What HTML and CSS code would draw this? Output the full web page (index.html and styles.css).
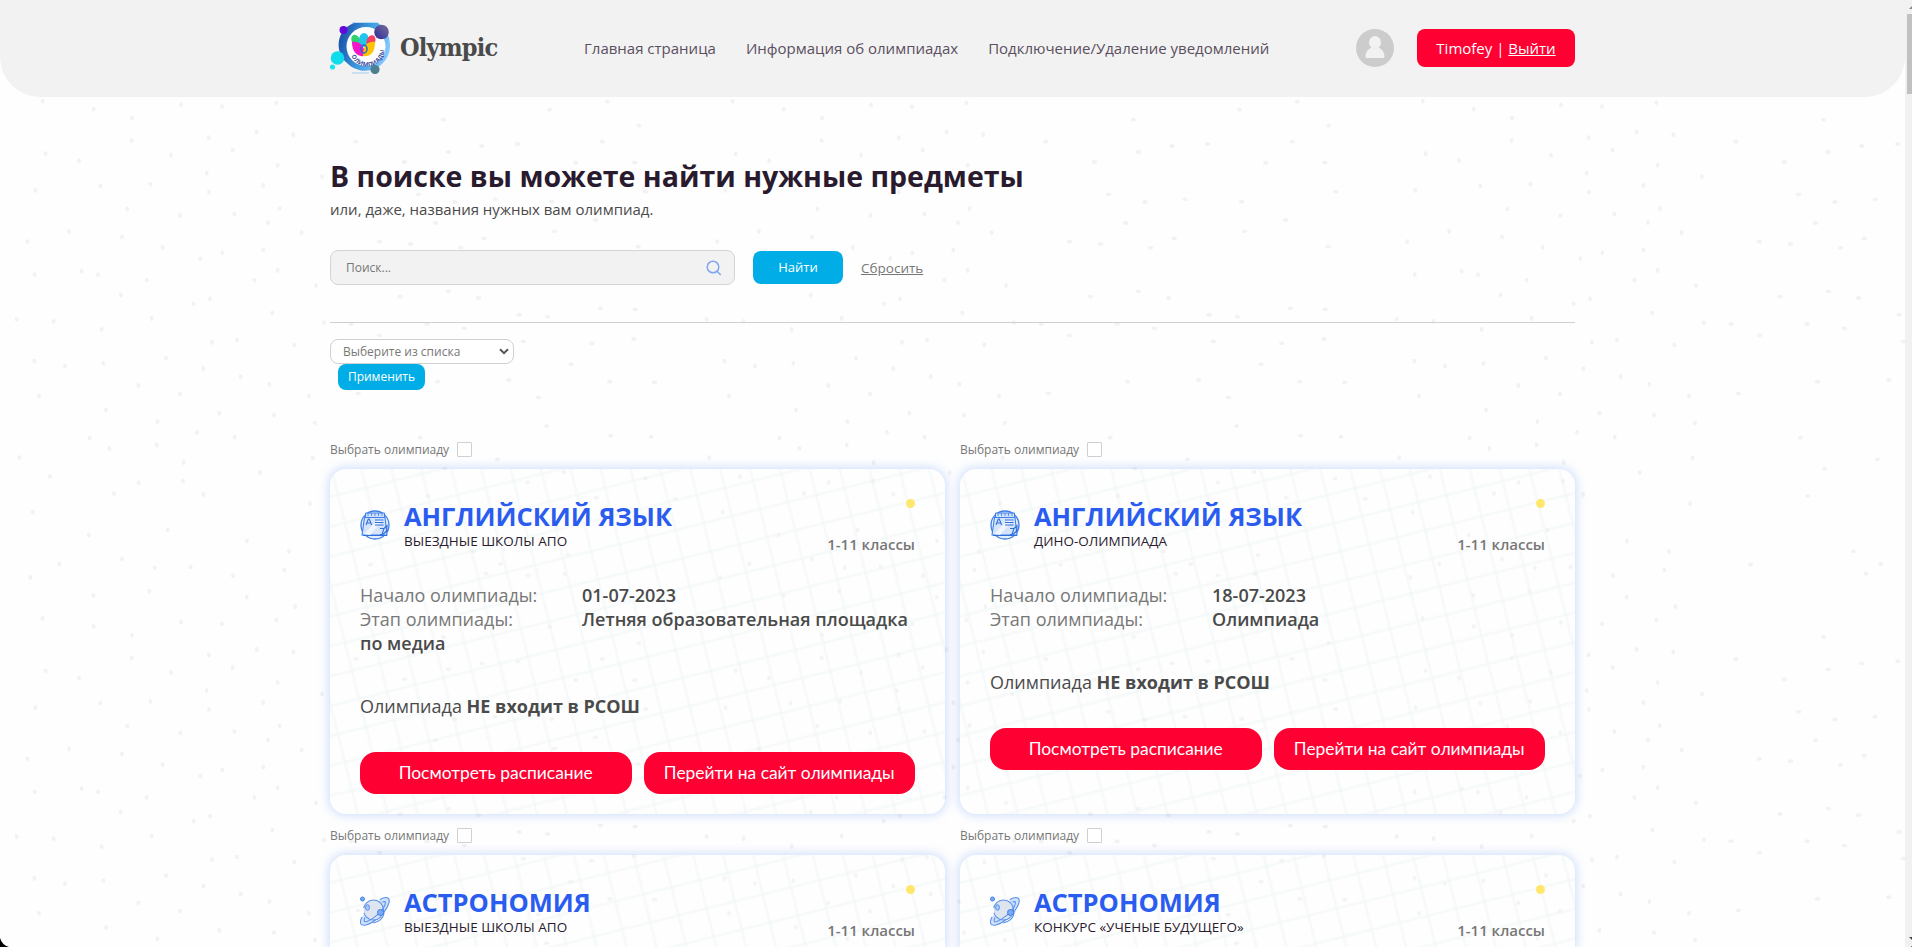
FILE: index.html
```html
<!DOCTYPE html>
<html lang="ru">
<head>
<meta charset="utf-8">
<title>Olympic</title>
<link rel="stylesheet" href="styles.css">
</head>
<body>
<svg class="dots" viewBox="0 0 1905 947" aria-hidden="true">
  <defs>
    <g id="dots">
      <path transform="translate(0 290) scale(.3333 .419)" d="M362 12h.1M630 21h.1M581 33h.1M817 55h.1M50 70h.1M161 75h.1M305 94h.1M455 68h.1M972 78h.1M636 125h.1M711 119h.1M883 131h.1M103 170h.1M195 182h.1M310 175h.1M498 163h.1M610 188h.1M722 207h.1M808 225h.1M117 253h.1M415 228h.1M540 248h.1M927 253h.1M318 287h.1M658 294h.1M822 299h.1M472 314h.1M945 317h.1M591 340h.1M704 351h.1M269 354h.1M328 378h.1M470 370h.1M58 400h.1M551 412h.1M938 401h.1M779 436h.1M150 445h.1M416 460h.1M549 456h.1M342 486h.1M610 488h.1M930 510h.1M98 530h.1M266 585h.1M503 573h.1M741 599h.1M867 624h.1M178 654h.1M366 642h.1M464 663h.1M572 661h.1M699 682h.1M853 668h.1M91 686h.1M280 729h.1M448 719h.1M740 733h.1M886 756h.1M128 784h.1M281 803h.1M543 793h.1M666 797h.1M829 788h.1M396 824h.1M395 878h.1M626 871h.1M770 858h.1M880 864h.1M137 909h.1M237 926h.1M513 913h.1M698 901h.1M833 937h.1M620 956h.1M106 997h.1M301 986h.1M451 982h.1M627 1001h.1M790 985h.1M966 964h.1M382 1041h.1M541 1057h.1M703 1054h.1M839 1040h.1M804 1074h.1M207 1095h.1M82 1119h.1M366 1108h.1M488 1133h.1M905 1098h.1M667 1146h.1M790 1139h.1M601 1160h.1M104 1198h.1M245 1190h.1M294 1198h.1M440 1211h.1M763 1211h.1M833 1188h.1M948 1224h.1"/>
      <path transform="translate(310 657.3) scale(.472 .3333)" d="M97 5h.1M364 18h.1M293 36h.1M440 12h.1M200 66h.1M619 5h.1M563 68h.1M688 68h.1M230 163h.1M307 186h.1M512 185h.1M711 155h.1M392 178h.1M605 240h.1M266 249h.1M518 274h.1M369 295h.1M147 305h.1M213 312h.1M319 323h.1M695 320h.1"/>
      <path transform="translate(310 140) scale(.472 .3333)" d="M293 454h.1M191 470h.1M357 474h.1M615 505h.1M689 508h.1M443 524h.1M503 530h.1M87 552h.1M248 552h.1M327 565h.1M147 586h.1M452 604h.1M597 610h.1M686 597h.1M553 673h.1M270 725h.1M421 720h.1M635 725h.1M730 727h.1M484 772h.1M102 760h.1"/>
      <path transform="translate(310 420) scale(.421 .3333)" d="M562 18h.1M714 47h.1M810 50h.1M262 53h.1M445 118h.1M320 146h.1M603 156h.1M796 175h.1M517 187h.1M280 228h.1M680 233h.1M868 236h.1M144 434h.1M418 461h.1M605 462h.1M518 466h.1M388 394h.1M781 669h.1M569 621h.1M706 597h.1M613 405h.1M453 432h.1M317 651h.1"/>
    </g>
    <symbol id="english" viewBox="0 0 30 30">
      <circle cx="15" cy="15" r="14" fill="#e6effc" stroke="#3f7fe8" stroke-width="1.3"/>
      <path d="M5.500 3h19v6h-19z" fill="#cfe0fb" stroke="#3f7fe8"/>
      <path d="M8 3v3m3.500-3v3M15 3v3m3.500-3v3M22 3v3" stroke="#3f7fe8" stroke-width=".8"/>
      <path d="M4.500 7.500h20.500l2 17.500h-25z" fill="#d5e4fb" stroke="#3f7fe8" stroke-width="1.100"/>
      <path d="M4 24L18 10h5L10 25z" fill="#f1f6fe"/>
      <path d="M6 15l2.300-6h1l2.300 6M7 13h3.800M15 10h8.500M15 12.500h8.500M15 15h8.500M3 25.500h24M20 18.500h4l-2 6h-2m4-6l3-3v5l-4 4" fill="none" stroke="#2f6fdc" stroke-width="1.100"/>
    </symbol>
    <symbol id="planet" viewBox="0 0 30 30">
      <path d="M20 3.500C27-.5 31 2 28.500 8 26 16 14 27 6 29c-6 1-7-2-4-8" fill="#cfe0fb" stroke="#5b92ea" stroke-width="1.100"/>
      <circle cx="13.500" cy="14" r="10" fill="#dfe4f1" stroke="#5b92ea" stroke-width="1.100"/>
      <path d="M22.500 6c3.600-1.200 3.500.5 2 4C22 16 13 23 7 25.500c-3 1-3.500-.5-2-4M24 16c0 6-5 10-11 11" fill="none" stroke="#5b92ea" stroke-width="1.100"/>
      <ellipse cx="7.500" cy="11.500" rx="2" ry="2.800" fill="#a9c8f7" stroke="#5b92ea"/>
      <circle cx="20.500" cy="16.500" r="3" fill="#7dabf2" stroke="#3f7fe8"/>
      <circle cx="2.500" cy="3" r="2" fill="#7dabf2" stroke="#3f7fe8"/>
      <path d="M3.500 12v5" stroke="#fff" stroke-width="1.500"/>
    </symbol>
  </defs>
  <use href="#dots" y="-517.3"/><use href="#dots"/><use href="#dots" y="517.3"/>
  <use href="#dots" x="690" y="-517.3"/><use href="#dots" x="690"/><use href="#dots" x="690" y="517.3"/>
  <use href="#dots" x="1380" y="-517.3"/><use href="#dots" x="1380"/><use href="#dots" x="1380" y="517.3"/>
</svg>

<header class="header">
  <div class="header__inner">
    <a class="logo">
      <svg class="logo__mark" viewBox="0 0 60 52">
        <defs>
          <linearGradient id="ring" x1="0" y1=".3" x2="1" y2=".6"><stop offset="0" stop-color="#1a50a8"/><stop offset=".5" stop-color="#3c9be0"/><stop offset="1" stop-color="#8accff"/></linearGradient>
          <linearGradient id="ball" x1="0" y1="1" x2="1" y2="0"><stop offset="0" stop-color="#2b2a96"/><stop offset="1" stop-color="#7a6f9c"/></linearGradient>
          <path id="arc" d="M21.500 34A17 17 0 0 0 53 21"/>
        </defs>
        <path d="M22 .8h26M22 51h17" stroke="#9fd0f2"/>
        <path d="M24 1h24a26 26 0 0 1 12 22 25 25 0 0 1-43 18C4 30 6 8 24 1z" fill="url(#ring)"/>
        <circle cx="36" cy="24.500" r="19.500" fill="#fff"/>
        <ellipse cx="26" cy="19" rx="4.300" ry="6.500" transform="rotate(-25 26 19)" fill="#2fd36c"/>
        <ellipse cx="34" cy="18" rx="5" ry="7" fill="#22c5ee"/>
        <ellipse cx="41" cy="19" rx="4.300" ry="6" transform="rotate(20 41 19)" fill="#f6405f"/>
        <path d="M22 20c8-1 13 4 13 14-8 1-13-4-13-14z" fill="#f416c8"/>
        <path d="M45 20c-8-1-12 4-12 14 8 1 12-4 12-14z" fill="#ffc400"/>
        <ellipse cx="34" cy="27" rx="3" ry="4" fill="none" stroke="#2869c8" stroke-width="1.500"/>
        <text class="logo__arc"><textPath href="#arc">ОЛИМПИАДЫ</textPath></text>
        <circle cx="13.500" cy="8" r="4" fill="#6507dc"/>
        <circle cx="51.500" cy="10" r="7.300" fill="url(#ball)"/>
        <circle cx="7.500" cy="36" r="6.800" fill="#10dcec"/>
        <circle cx="2.500" cy="45" r="2.600" fill="#19e5ef"/>
        <circle cx="45" cy="47.500" r="4.600" fill="#4c8091"/>
      </svg>
      <span class="logo__text">Olympic</span>
    </a>
    <nav class="nav">
      <a>Главная страница</a>
      <a>Информация об олимпиадах</a>
      <a>Подключение/Удаление уведомлений</a>
    </nav>
    <svg class="avatar" viewBox="0 0 38 38"><circle cx="19" cy="19" r="19" fill="#ccc"/><ellipse cx="19" cy="13.500" rx="6" ry="6.500" fill="#f2f2f2"/><path d="M9.500 27.500c0-5 4-8.500 6.500-9 2 2 4 2 6 0 2.500.5 6.500 4 6.500 9 0 1-.5 1.500-1.500 1.500H11c-1 0-1.500-.5-1.500-1.500z" fill="#f2f2f2"/></svg>
    <div class="account">Timofey | <a>Выйти</a></div>
  </div>
</header>

<main class="container">
  <h1 class="title">В поиске вы можете найти нужные предметы</h1>
  <p class="subtitle">или, даже, названия нужных вам олимпиад.</p>
  <form class="search">
    <div class="search__box"><span>Поиск...</span>
      <svg viewBox="0 0 16 16" fill="none" stroke="#7fa6ee" stroke-width="1.500" stroke-linecap="round"><circle cx="7" cy="7" r="5.800"/><path d="M11.300 11.500l3 3"/></svg>
    </div>
    <a class="search__button">Найти</a>
    <a class="search__reset">Сбросить</a>
  </form>
  <div class="filter">
    <div class="filter__select">Выберите из списка
      <svg viewBox="0 0 10 7" fill="none" stroke="#555" stroke-width="2"><path d="M1 1.200l4 4 4-4"/></svg>
    </div>
    <a class="filter__apply">Применить</a>
  </div>

  <div class="grid">
    <section class="item">
      <label class="pick">Выбрать олимпиаду <i></i></label>
      <article class="card">
        <div class="card__head"><svg class="card__icon"><use href="#english"/></svg>
          <div><h2>АНГЛИЙСКИЙ ЯЗЫК</h2><p>ВЫЕЗДНЫЕ ШКОЛЫ АПО</p></div>
          <div class="card__side"><i></i><span>1-11 классы</span></div></div>
        <p class="card__row"><span>Начало олимпиады:</span><b>01-07-2023</b></p>
        <p class="card__row"><span>Этап олимпиады:</span><b>Летняя образовательная площадка по медиа</b></p>
        <p class="card__note">Олимпиада <b>НЕ входит в РСОШ</b></p>
        <div class="card__actions"><a>Посмотреть расписание</a><a>Перейти на сайт олимпиады</a></div>
      </article>
    </section>
    <section class="item">
      <label class="pick">Выбрать олимпиаду <i></i></label>
      <article class="card">
        <div class="card__head"><svg class="card__icon"><use href="#english"/></svg>
          <div><h2>АНГЛИЙСКИЙ ЯЗЫК</h2><p>ДИНО-ОЛИМПИАДА</p></div>
          <div class="card__side"><i></i><span>1-11 классы</span></div></div>
        <p class="card__row"><span>Начало олимпиады:</span><b>18-07-2023</b></p>
        <p class="card__row"><span>Этап олимпиады:</span><b>Олимпиада</b></p>
        <p class="card__note">Олимпиада <b>НЕ входит в РСОШ</b></p>
        <div class="card__actions"><a>Посмотреть расписание</a><a>Перейти на сайт олимпиады</a></div>
      </article>
    </section>
    <section class="item item--last">
      <label class="pick">Выбрать олимпиаду <i></i></label>
      <article class="card">
        <div class="card__head"><svg class="card__icon"><use href="#planet"/></svg>
          <div><h2>АСТРОНОМИЯ</h2><p>ВЫЕЗДНЫЕ ШКОЛЫ АПО</p></div>
          <div class="card__side"><i></i><span>1-11 классы</span></div></div>
      </article>
    </section>
    <section class="item item--last">
      <label class="pick">Выбрать олимпиаду <i></i></label>
      <article class="card">
        <div class="card__head"><svg class="card__icon"><use href="#planet"/></svg>
          <div><h2>АСТРОНОМИЯ</h2><p>КОНКУРС «УЧЕНЫЕ БУДУЩЕГО»</p></div>
          <div class="card__side"><i></i><span>1-11 классы</span></div></div>
      </article>
    </section>
  </div>
</main>

<svg class="scrollbar" viewBox="0 0 7 947"><path d="M0 0h7v947H0z" fill="#f1f1f1"/><path d="M2 14h5v80H2z" fill="#c1c1c1"/><path d="M4 9l3-3v3z" fill="#888"/><path d="M4 937h3v3z" fill="#444"/><path d="M6 947l1-1v1z"/></svg>
<svg class="corner" viewBox="0 0 9 9"><path d="M0 0q2 7 9 9H0z"/></svg>
</body>
</html>
```
FILE: styles.css
```css
* { box-sizing: border-box; margin: 0; padding: 0; }

body {
  position: relative;
  width: 1912px;
  height: 947px;
  overflow: hidden;
  background: #fefefe;
  color: #4a4a4a;
  font-family: "Open Sans", "Noto Sans", sans-serif;
}

.dots { position: absolute; left: 0; top: 0; width: 1905px; height: 947px; z-index: -1; }
#dots path {
  fill: none;
  stroke: #f2f2f2;
  stroke-width: 11.5px;
  stroke-linecap: round;
}

.header { width: 1905px; height: 97px; background: #f2f2f2; border-radius: 0 0 40px 40px; }
.header__inner { width: 1245px; height: 96px; margin-left: 330px; display: flex; align-items: center; }
.logo { display: flex; align-items: center; width: 254px; gap: 10px; }
.logo__mark { width: 60px; height: 52px; }
.logo__arc { font: bold 6px "Open Sans", sans-serif; letter-spacing: .3px; fill: #3b4a9a; }
.logo__text { font: bold 25px/30px "DejaVu Serif Condensed", "DejaVu Serif", serif; font-stretch: condensed; letter-spacing: -.8px; color: #4a4a4a; }
.nav { display: flex; gap: 30px; font-size: 15px; line-height: 20px; white-space: nowrap; color: #5a4f5e; }
.avatar { width: 38px; height: 38px; margin-left: auto; }
.account {
  width: 158px; height: 38px; margin-left: 23px;
  border-radius: 8px; background: #ff0032; color: #fff;
  font-size: 15px; line-height: 39px; text-align: center;
}
.account a { text-decoration: underline; }

.container { width: 1245px; margin-left: 330px; padding-top: 59px; }
.title { font-size: 28.500px; line-height: 40px; color: #2a1a2e; white-space: nowrap; }
.subtitle { font-size: 15px; line-height: 20px; margin-top: 3px; }

.search { display: flex; align-items: center; height: 35px; margin-top: 31px; font-size: 13.500px; }
.search__box {
  display: flex; align-items: center; justify-content: space-between;
  width: 405px; height: 35px; padding: 0 12px 0 15px;
  border: 1px solid #d4d4d4; border-radius: 8px; background: #f2f2f2;
  color: #777; font-size: 12px;
}
.search__box svg { width: 16px; height: 16px; }
.search__button {
  width: 90px; height: 33px; margin-left: 18px;
  border-radius: 8px; background: #00ade6; color: #fff;
  font-size: 13px; line-height: 33px; text-align: center;
}
.search__reset { margin-left: 18px; color: #777; text-decoration: underline; }

.filter { margin-top: 37px; padding-top: 16px; border-top: 1px solid #d0d0d0; font-size: 12px; }
.filter__select {
  display: flex; align-items: center; justify-content: space-between;
  width: 184px; height: 25px; padding: 0 4px 0 12px;
  border: 1px solid #d0d0d0; border-radius: 8px; background: #fff; color: #777;
}
.filter__select svg { width: 10px; height: 7px; }
.filter__apply {
  display: block; width: 87px; height: 26px; margin-left: 8px;
  border-radius: 8px; background: #00ade6; color: #fff;
  line-height: 25px; text-align: center;
}

.grid { display: grid; grid-template-columns: 615px 615px; column-gap: 15px; margin-top: 45px; }
.item { height: 386px; }
.pick { display: flex; align-items: center; gap: 8px; height: 29px; color: #777; font-size: 12px; margin-bottom: 5px; }
.pick i { width: 15px; height: 15px; border: 1px solid #d0d0d0; border-radius: 1px; background: #fff; }

.card {
  height: 345px; padding: 30px; border-radius: 16px;
  box-shadow: 0 0 10px 2px rgba(110, 155, 245, .3);
  background:
    repeating-linear-gradient(76deg, transparent 0 25px, rgba(225, 238, 237, .22) 26px 28px, transparent 29px),
    repeating-linear-gradient(166deg, transparent 0 25px, rgba(225, 238, 237, .22) 26px 28px, transparent 29px),
    rgba(254, 255, 255, .2);
}
.item--last { height: 127px; }
.item--last .card { height: 93px; padding-bottom: 0; border-radius: 16px 16px 0 0; }
.item--last .card__head { height: 63px; }
.card__head { display: flex; height: 84px; }
.card__icon { width: 30px; height: 30px; margin: 11px 14px 0 0; }
.card__head h2 { color: #2b5cf0; font-size: 25.500px; line-height: 34px; }
.card__head p { color: #2a1a2e; font-size: 13.500px; line-height: 18px; margin-top: -1px; }
.card__side { display: flex; flex-direction: column; align-items: flex-end; margin-left: auto; }
.card__side i { width: 9px; height: 9px; border-radius: 50%; background: #ffe76b; }
.card__side span { margin-top: 26px; color: #777; font-size: 15px; font-weight: 600; line-height: 20px; }
.card__row { font-size: 18px; line-height: 24px; }
.card__row span { display: inline-block; width: 222px; color: #777; }
.card__row b { font-weight: 600; }
.card__note { margin-top: 39px; font-size: 18px; line-height: 24px; }
.card__actions { display: flex; gap: 12px; margin-top: 34px; }
.card__actions a {
  flex: 1; height: 42px; border-radius: 16px; background: #ff0032; color: #fff;
  font: 17.400px/42px Lato, "Open Sans", sans-serif; text-align: center; white-space: nowrap;
}

.scrollbar { position: absolute; right: 0; top: 0; width: 7px; height: 947px; }
.corner { position: absolute; left: 0; bottom: 0; width: 9px; height: 9px; }
```
